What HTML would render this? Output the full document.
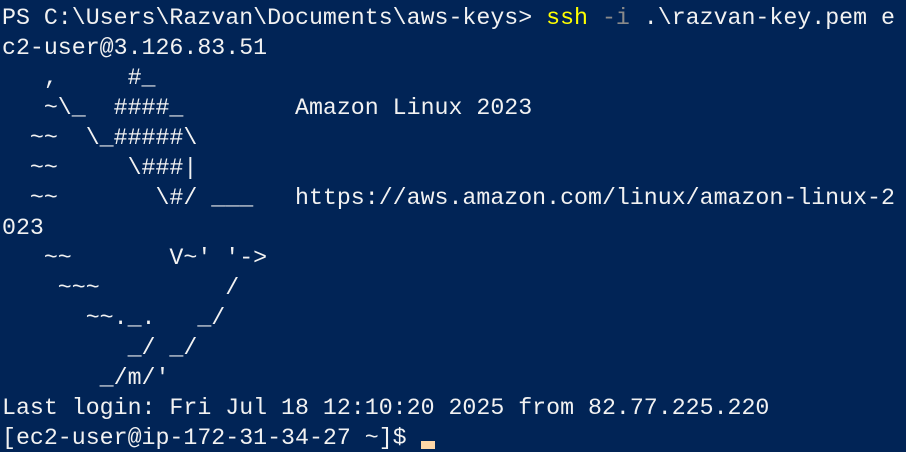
<!DOCTYPE html>
<html><head><meta charset="utf-8"><style>
html,body{margin:0;padding:0;background:#012456;width:906px;height:452px;overflow:hidden}
pre{margin:0;padding:3px 0 0 2px;font-family:"Liberation Mono",monospace;font-size:23.25px;line-height:30px;color:#f2f2f2;white-space:pre}
.y{color:#ffff00}.g{color:#8a8a8a}
.c{display:inline-block;width:14px;height:8px;background:#ffd8a8;vertical-align:-5px;margin-left:0px}
</style></head><body><pre>PS C:\Users\Razvan\Documents\aws-keys&gt; <span class="y">ssh</span> <span class="g">-i</span> .\razvan-key.pem e
c2-user@3.126.83.51
   ,     #_
   ~\_  ####_        Amazon Linux 2023
  ~~  \_#####\
  ~~     \###|
  ~~       \#/ ___   https://aws.amazon.com/linux/amazon-linux-2
023
   ~~       V~' '-&gt;
    ~~~         /
      ~~._.   _/
         _/ _/
       _/m/'
Last login: Fri Jul 18 12:10:20 2025 from 82.77.225.220
[ec2-user@ip-172-31-34-27 ~]$ <span class="c"></span></pre></body></html>
